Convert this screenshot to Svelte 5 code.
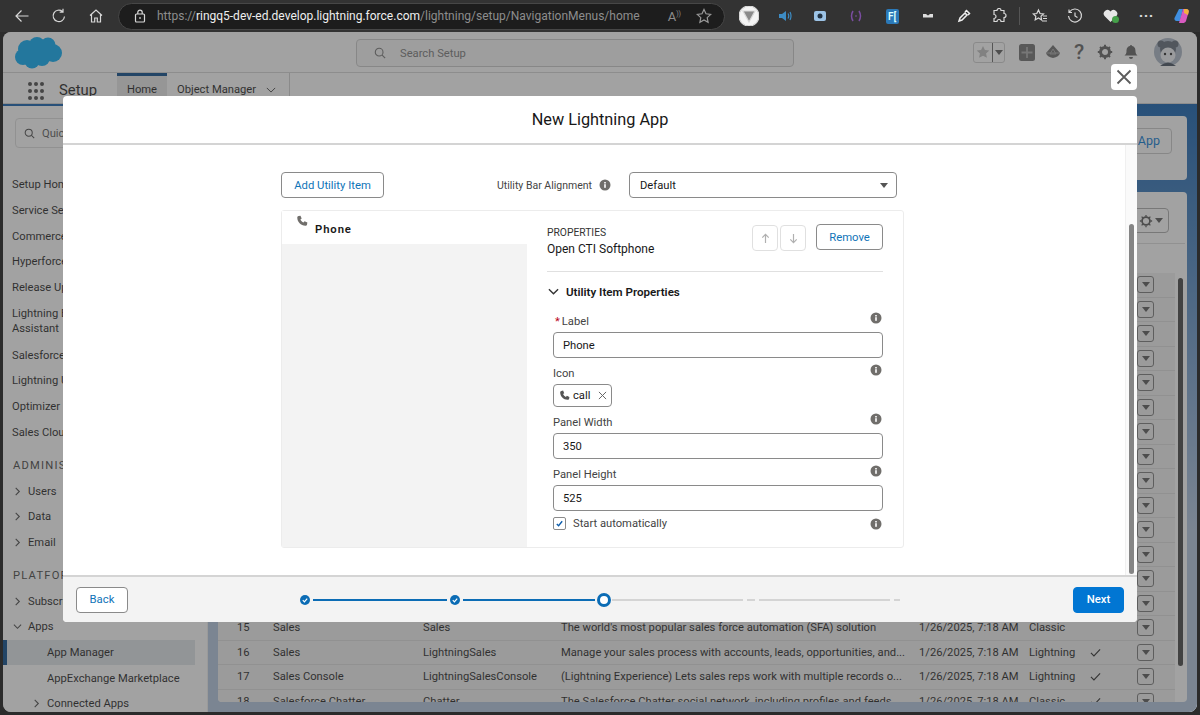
<script lang="ts">
  // New Lightning App wizard, utility items step, over a dimmed Setup page.
  const sideItems = [
    { label: 'Setup Home' },
    { label: 'Service Setup' },
    { label: 'Commerce Setup' },
    { label: 'Hyperforce Assistant' },
    { label: 'Release Updates' },
    { label: 'Lightning Experience Assistant', wrap: true },
    { label: 'Salesforce Go' },
    { label: 'Lightning Usage' },
    { label: 'Optimizer' },
    { label: 'Sales Cloud Everywhere' },
    { head: 'ADMINISTRATION' },
    { label: 'Users', arrow: 'right' },
    { label: 'Data', arrow: 'right' },
    { label: 'Email', arrow: 'right' },
    { head: 'PLATFORM TOOLS' },
    { label: 'Subscriptions', arrow: 'right' },
    { label: 'Apps', arrow: 'down' },
    { label: 'App Manager', sub: true, active: true },
    { label: 'AppExchange Marketplace', sub: true },
    { label: 'Connected Apps', sub: true, arrow: 'right' },
  ];

  const visibleRows: Record<number, string[]> = {
    15: ['Sales', 'Sales', "The world's most popular sales force automation (SFA) solution", '1/26/2025, 7:18 AM', 'Classic', ''],
    16: ['Sales', 'LightningSales', 'Manage your sales process with accounts, leads, opportunities, and...', '1/26/2025, 7:18 AM', 'Lightning', 'y'],
    17: ['Sales Console', 'LightningSalesConsole', '(Lightning Experience) Lets sales reps work with multiple records o...', '1/26/2025, 7:18 AM', 'Lightning', 'y'],
    18: ['Salesforce Chatter', 'Chatter', 'The Salesforce Chatter social network, including profiles and feeds', '1/26/2025, 7:18 AM', 'Classic', 'y'],
  };
  const rows = Array.from({ length: 18 }, (_, i) => ({
    num: i + 1,
    cells: visibleRows[i + 1] ?? ['', '', '', '', '', ''],
  }));

  const phone = 'M3.2 1.2 5.6.8l1.5 3.5-1.6 1.3c.8 1.8 2.1 3.1 3.9 3.9l1.3-1.6 3.5 1.5-.4 2.4c-.2 1-1 1.6-2 1.6C6 13.4 1.6 9 1.6 3.2c0-1 .6-1.8 1.6-2z';
</script>

{#snippet info()}
  <svg class="info" viewBox="0 0 12 12" width="12" height="12"><circle cx="6" cy="6" r="5.5" fill="#706e6b" /><rect x="5.2" y="5.2" width="1.6" height="3.6" fill="#fff" /><rect x="5.2" y="3" width="1.6" height="1.5" fill="#fff" /></svg>
{/snippet}

{#snippet done()}
  <svg viewBox="0 0 10 10" width="10" height="10"><circle cx="5" cy="5" r="5" fill="#0b6cb5" /><path d="M2.8 5.2 4.4 6.8 7.2 3.6" fill="none" stroke="#fff" stroke-width="1.2" /></svg>
{/snippet}

<div class="screen">
  <div class="toolbar">
    <div class="nav-icons">
      <svg viewBox="0 0 16 16" width="16" height="16"><path d="M14.5 8H2M7.5 2.5 2 8l5.500 5.500" /></svg>
      <svg viewBox="0 0 16 16" width="16" height="16"><path d="M13.500 8.500A5.700 5.700 0 1 1 11.500 3.500M12 .8v3.400H8.700" /></svg>
      <svg viewBox="0 0 16 16" width="16" height="16"><path d="M2 7.500 8 2l6 5.500M3.500 6.500V14h3.200v-4h2.600v4h3.200V6.500" /></svg>
    </div>
    <div class="url">
      <svg viewBox="0 0 14 14" width="14" height="14"><rect x="2.500" y="5" width="9" height="8" rx="1" /><path d="M4.800 5V3.300a2.200 2.200 0 0 1 4.400 0V5M7 8v2" /></svg>
      <span class="address"><span class="dim">https://</span>ringq5-dev-ed.develop.lightning.force.com<span class="dim">/lightning/setup/NavigationMenus/home</span></span>
      <span class="read">A<sup>))</sup></span>
      <svg class="url-star" viewBox="0 0 16 16" width="16" height="16"><path d="m8 1.500 2 4.300 4.700.6-3.500 3.200.9 4.700L8 12l-4.100 2.300.9-4.700L1.300 6.400 6 5.800z" /></svg>
    </div>
    <div class="ext">
      <span class="ext-v"><svg viewBox="0 0 20 20" width="20" height="20"><circle cx="10" cy="10" r="10" fill="#f4f4f4" /><path d="M4 5h12l-6 11z" fill="#8a8a8a" /></svg></span>
      <svg viewBox="0 0 14 14" width="14" height="14"><path d="M1 5h3l4-3v10L4 9H1z" fill="#3d8cc4" stroke="none" /><path d="M10 4.500q1.500 2.500 0 5M12 3q2 4 0 8" stroke="#3d8cc4" /></svg>
      <svg viewBox="0 0 14 14" width="14" height="14"><rect x="1" y="2" width="12" height="10" rx="2" fill="#9cc3e6" stroke="none" /><circle cx="7" cy="7" r="2.500" fill="#234" stroke="none" /></svg>
      <svg viewBox="0 0 14 14" width="14" height="14"><path d="M4 2Q1 7 4 12M10 2q3 5 0 10" stroke="#7a4da0" stroke-width="1.500" /><path d="M6 7h2" stroke="#7a4da0" /></svg>
      <span class="ext-fi">F[</span>
      <svg viewBox="0 0 14 14" width="14" height="14"><path d="M2 5h3l2 1.500L9 5h3v3.500H2z" fill="#ddd" stroke="none" /></svg>
      <svg viewBox="0 0 14 14" width="14" height="14"><path d="m2 12 1-3 5-5 2 2-5 5zM8 3l1.500-1.500 3 3L11 6" stroke="#eee" stroke-width="1.500" /></svg>
      <svg viewBox="0 0 16 16" width="16" height="16"><path d="M6 2.500a2 2 0 0 1 4 0H13v3a2 2 0 0 1 0 4V13.500H10a2 2 0 0 0-4 0H3V10.500a2 2 0 0 0 0-4V2.500z" /></svg>
      <span class="ext-sep"></span>
      <svg viewBox="0 0 16 16" width="16" height="16"><path d="m6.500 2 1.500 3.500 3.500.5-2.500 2.300.6 3.700L6.500 10 3.200 11.800 3.800 8.300 1.300 6 4.800 5.500zM11 8h4M11 10.500h4M10 13h5" /></svg>
      <svg viewBox="0 0 16 16" width="16" height="16"><path d="M2.500 4A6.500 6.500 0 1 1 1.500 8M2 1.500V4.500H5M8 4.500V8l2.500 1.500" /></svg>
      <svg viewBox="0 0 18 16" width="18" height="16"><path d="M8.500 14 2.500 8A3.500 3.500 0 0 1 8.500 3.500 3.500 3.500 0 0 1 14.500 8z" fill="#e6e6e6" stroke="none" /><circle cx="13.500" cy="11.500" r="3.500" fill="#45a04a" stroke="none" /></svg>
      <span class="ext-dots">···</span>
      <svg viewBox="0 0 18 18" width="18" height="18"><path d="M6 2h4l-3 12H3.500C2 14 1 12.500 1.500 11z" fill="#3f8fe0" stroke="none" /><path d="M10 2h3c2 0 3 2 2.500 3.500L13 14c-.5 1.500-2 2-3 2H6z" fill="#d85ac0" stroke="none" /><path d="M11 2h2.500C15 2 16 3 15.800 4.500L15 8 11 6z" fill="#f0b040" stroke="none" /></svg>
    </div>
  </div>

  <div class="window">
    <header class="top">
      <svg class="logo" viewBox="0 0 48 32" width="48" height="32"><g fill="#00a9f4"><circle cx="12" cy="12" r="9" /><circle cx="22" cy="8" r="8" /><circle cx="33" cy="8" r="7.500" /><circle cx="38" cy="16" r="9" /><circle cx="27" cy="21" r="8" /><circle cx="17" cy="24" r="7.500" /><circle cx="8" cy="20" r="8" /><rect x="10" y="8" width="26" height="16" /></g></svg>
      <div class="search">
        <svg viewBox="0 0 14 14" width="12" height="12"><circle cx="6" cy="6" r="4.500" /><path d="m9.500 9.500 3.500 3.500" /></svg>
        <span>Search Setup</span>
      </div>
      <div class="global">
        <div class="fav">
          <span class="fav-star"><svg viewBox="0 0 16 16" width="14" height="14"><path d="m8 1 2.200 4.600 5 .6-3.700 3.400 1 5L8 12.200l-4.500 2.400 1-5L.800 6.200l5-.6z" /></svg></span>
          <span class="fav-drop"></span>
        </div>
        <svg viewBox="0 0 16 17" width="16" height="17"><rect width="16" height="17" rx="2.500" fill="#6b6b6b" /><path d="M8 3v11M2.500 8.500h11" stroke="#a8a8a8" stroke-width="1.800" /></svg>
        <svg viewBox="0 0 16 16" width="16" height="16"><path d="M8 1 15 9q-1 4-7 5Q2 13 1 9z" fill="#6b6b6b" /><path d="M8 5 5 10h6zM1 9h14" stroke="#a8a8a8" fill="none" /></svg>
        <span class="help">?</span>
        <svg viewBox="0 0 16 16" width="16" height="16"><circle cx="8" cy="8" r="4.500" fill="none" stroke="#5f5f5f" stroke-width="3" /><path d="M8 .8v2.500M8 12.700v2.500M.8 8h2.500M12.700 8h2.500M3 3l1.800 1.800M11.200 11.200 13 13M13 3l-1.800 1.800M4.800 11.200 3 13" stroke="#5f5f5f" stroke-width="2" /></svg>
        <svg viewBox="0 0 16 16" width="16" height="16"><path d="M8 1a1 1 0 0 1 1 1c3 .7 3.500 3 3.500 5.500 0 2 1 3 2 4H1.500c1-1 2-2 2-4C3.500 5 4 2.700 7 2a1 1 0 0 1 1-1zM6 13h4a2 2 0 0 1-4 0z" fill="#5f5f5f" /></svg>
        <svg class="avatar" viewBox="0 0 28 28" width="28" height="28"><circle cx="14" cy="14" r="14" fill="#a9b4c4" /><circle cx="7" cy="6" r="3.500" fill="#5c6675" /><circle cx="21" cy="6" r="3.500" fill="#5c6675" /><circle cx="14" cy="11" r="8" fill="#5c6675" /><circle cx="14" cy="17" r="7.500" fill="#eef1f5" /><circle cx="11" cy="16" r="1.200" fill="#222" /><circle cx="17" cy="16" r="1.200" fill="#222" /><path d="M6 28q8-7 16 0z" fill="#3f4a5a" /></svg>
      </div>
    </header>

    <nav class="subnav">
      <div class="waffle">
        {#each Array(9) as _}<i></i>{/each}
      </div>
      <span class="app-name">Setup</span>
      <span class="tab on">Home</span>
      <span class="tab">Object Manager
        <svg viewBox="0 0 12 12" width="10" height="10"><path d="m1 3.500 5 5 5-5" /></svg>
      </span>
    </nav>

    <div class="page">
      <aside class="side">
        <div class="quick">
          <svg viewBox="0 0 14 14" width="11" height="11"><circle cx="6" cy="6" r="4.500" /><path d="m9.500 9.500 3.500 3.500" /></svg>
          <span>Quick Find</span>
        </div>
        <ul>
          {#each sideItems as item}
            {#if item.head}
              <li class="side-head">{item.head}</li>
            {:else}
              <li class="side-item" class:sub={item.sub} class:active={item.active} class:wrap={item.wrap} class:has-arrow={item.arrow}>
                {#if item.arrow}
                  <svg class="arrow" class:down={item.arrow === 'down'} viewBox="0 0 10 10" width="9" height="9"><path d="m3 1 4 4-4 4" /></svg>
                {/if}
                <span>{item.label}</span>
              </li>
            {/if}
          {/each}
        </ul>
      </aside>

      <main class="main">
        <section class="card head-card">
          <span class="new-app">New Lightning App</span>
        </section>
        <section class="card list-card">
          <div class="list-tools">
            <span class="gear-btn">
              <svg viewBox="0 0 16 16" width="14" height="14"><circle cx="8" cy="8" r="4.500" fill="none" stroke="#555" stroke-width="2" /><path d="M8 1v2M8 13v2M1 8h2M13 8h2M3 3l1.500 1.500M11.500 11.500 13 13M13 3l-1.500 1.500M4.500 11.500 3 13" stroke="#555" stroke-width="1.500" /></svg>
              <i class="caret"></i>
            </span>
          </div>
          <div class="list-head"></div>
          <div class="table-wrap">
            <div class="table">
              {#each rows as row}
                <div class="tr">
                  <span class="num">{row.num}</span>
                  <span>{row.cells[0]}</span>
                  <span>{row.cells[1]}</span>
                  <span>{row.cells[2]}</span>
                  <span>{row.cells[3]}</span>
                  <span>{row.cells[4]}</span>
                  <span class="tick">
                    {#if row.cells[5]}
                      <svg viewBox="0 0 12 12" width="11" height="11"><path d="m1 6.500 3.300 3.300L11 2.500" /></svg>
                    {/if}
                  </span>
                  <span class="row-btn"><i class="caret"></i></span>
                </div>
              {/each}
            </div>
            <div class="page-scroll"></div>
          </div>
        </section>
      </main>
    </div>

    <div class="backdrop"></div>

    <button class="close" aria-label="Close">
      <svg viewBox="0 0 16 16" width="16" height="16"><path d="m1.500 1.500 13 13M14.500 1.500l-13 13" /></svg>
    </button>

    <div class="modal">
      <div class="modal-head">New Lightning App</div>
      <div class="modal-body">
        <div class="content">
          <div class="topline">
            <button class="btn add">Add Utility Item</button>
            <span class="align-label">Utility Bar Alignment</span>
            {@render info()}
            <div class="select">
              <span>Default</span>
              <i class="caret"></i>
            </div>
          </div>

          <div class="panel">
            <div class="items">
              <div class="item">
                <svg viewBox="0 0 15 15" width="12" height="12"><path d={phone} /></svg>
                <span>Phone</span>
              </div>
            </div>

            <div class="props">
              <div class="props-head">
                <div class="props-title">
                  <div class="eyebrow">PROPERTIES</div>
                  <div class="type">Open CTI Softphone</div>
                </div>
                <span class="move">
                  <svg viewBox="0 0 12 12" width="11" height="11"><path d="M6 11V1.500M2.500 5 6 1.500 9.500 5" /></svg>
                </span>
                <span class="move">
                  <svg viewBox="0 0 12 12" width="11" height="11"><path d="M6 1v9.500M2.500 7 6 10.500 9.500 7" /></svg>
                </span>
                <button class="btn remove">Remove</button>
              </div>

              <div class="section-title">
                <svg viewBox="0 0 12 12" width="11" height="11"><path d="m1 3.500 5 5 5-5" /></svg>
                Utility Item Properties
              </div>

              <div class="fields">
                <div class="field">
                  <div class="field-label"><span><b>*</b>Label</span>{@render info()}</div>
                  <div class="input">Phone</div>
                </div>
                <div class="field">
                  <div class="field-label"><span>Icon</span>{@render info()}</div>
                  <div class="pill">
                    <svg viewBox="0 0 15 15" width="11" height="11"><path d={phone} /></svg>
                    <span>call</span>
                    <svg class="x" viewBox="0 0 10 10" width="9" height="9"><path d="m1 1 8 8M9 1 1 9" /></svg>
                  </div>
                </div>
                <div class="field">
                  <div class="field-label"><span>Panel Width</span>{@render info()}</div>
                  <div class="input">350</div>
                </div>
                <div class="field">
                  <div class="field-label"><span>Panel Height</span>{@render info()}</div>
                  <div class="input">525</div>
                </div>
                <div class="check-row">
                  <span class="checkbox"><svg viewBox="0 0 10 10" width="9" height="9"><path d="m2 5.500 2 2 4-5" /></svg></span>
                  <span>Start automatically</span>
                  {@render info()}
                </div>
              </div>
            </div>
          </div>
        </div>
        <div class="track"></div>
        <div class="thumb"></div>
      </div>
      <div class="modal-foot">
        <button class="btn back">Back</button>
        <div class="progress">
          {@render done()}
          <i class="line blue l1"></i>
          {@render done()}
          <i class="line blue l2"></i>
          <span class="current"></span>
          <i class="line l3"></i>
          <i class="line dash"></i>
          <i class="line l4"></i>
          <i class="line dash end"></i>
        </div>
        <button class="btn next">Next</button>
      </div>
    </div>
  </div>
</div>

<style>
  :global(body) {
    margin: 0;
    background: #2b2b2b;
  }
  .screen {
    width: 1200px;
    height: 715px;
    display: flex;
    flex-direction: column;
    overflow: hidden;
    font-family: Roboto, 'Liberation Sans', sans-serif;
    font-size: 11.2px;
    color: #181818;
  }
  button {
    font-family: inherit;
  }

  /* browser chrome */
  .toolbar {
    height: 32px;
    flex-shrink: 0;
    display: flex;
    align-items: center;
    background: #333;
  }
  .toolbar svg {
    fill: none;
    stroke: #d8d8d8;
    stroke-width: 1.2;
    flex-shrink: 0;
  }
  .nav-icons {
    display: flex;
    gap: 21px;
    padding-left: 14px;
    width: 118px;
    box-sizing: border-box;
  }
  .url {
    width: 607px;
    height: 27px;
    box-sizing: border-box;
    display: flex;
    align-items: center;
    padding: 0 12px 0 14px;
    background: #1d1d1d;
    border: 1px solid #474747;
    border-radius: 14px;
  }
  .address {
    margin-left: 10px;
    flex: 1;
    min-width: 0;
    color: #eee;
    font-size: 12px;
    white-space: nowrap;
  }
  .dim {
    color: #8d8d8d;
  }
  .read {
    color: #8d8d8d;
    font-size: 13px;
    margin-right: 15px;
  }
  .read sup {
    font-size: 7px;
  }
  .toolbar .url-star {
    stroke: #9a9a9a;
  }
  .ext {
    flex: 1;
    display: grid;
    grid-template-columns: repeat(8, 35.8px) 5px repeat(5, 35.4px);
    align-items: center;
    justify-items: center;
    padding-left: 6px;
  }
  .ext-v {
    display: flex;
  }
  .ext-fi {
    width: 13px;
    height: 15px;
    background: #2b79b8;
    color: #dff;
    font-size: 10px;
    font-weight: 600;
    text-align: center;
    line-height: 15px;
    border-radius: 2px;
  }
  .ext-sep {
    width: 1px;
    height: 18px;
    background: #555;
  }
  .ext-dots {
    color: #ddd;
    font-size: 15px;
    font-weight: 700;
    letter-spacing: 0.5px;
  }

  /* dimmed window */
  .window {
    position: relative;
    flex: 1;
    min-height: 0;
    margin: 0 3px 3px;
    border-radius: 8px;
    overflow: hidden;
    display: flex;
    flex-direction: column;
    background: #fff;
  }
  .backdrop {
    position: absolute;
    inset: 0;
    background: rgba(70, 70, 70, 0.5);
  }
  .top {
    height: 41px;
    flex-shrink: 0;
    display: flex;
    align-items: center;
    box-sizing: border-box;
    border-bottom: 1px solid #d5d5d5;
    position: relative;
  }
  .logo {
    margin-left: 12px;
    margin-top: 2px;
  }
  .search {
    position: absolute;
    left: 353px;
    top: 7px;
    width: 438px;
    height: 28px;
    box-sizing: border-box;
    display: flex;
    align-items: center;
    gap: 14px;
    padding-left: 17px;
    border: 1px solid #c9c9c9;
    border-radius: 4px;
    background: #f6f6f6;
    color: #747474;
  }
  .search svg {
    fill: none;
    stroke: #747474;
    stroke-width: 1.300;
  }
  .global {
    margin-left: auto;
    display: flex;
    align-items: center;
    gap: 10px;
    padding-right: 15px;
  }
  .fav {
    display: flex;
    height: 19px;
    margin-right: 4px;
    border: 1px solid #c9c9c9;
    border-radius: 3px;
    opacity: 0.9;
  }
  .fav-star {
    width: 18px;
    display: flex;
    align-items: center;
    justify-content: center;
  }
  .fav-star svg {
    fill: #b5b5b5;
  }
  .fav-drop {
    width: 11px;
    border-left: 1px solid #555;
    position: relative;
  }
  .fav-drop::after {
    content: '';
    position: absolute;
    left: 2px;
    top: 7px;
    border: 4px solid transparent;
    border-top: 5px solid #444;
    border-bottom: 0;
  }
  .help {
    font-size: 21px;
    font-weight: 500;
    color: #5f5f5f;
    width: 16px;
    text-align: center;
    line-height: 20px;
  }
  .avatar {
    margin-left: 5px;
  }
  .subnav {
    height: 31px;
    flex-shrink: 0;
    display: flex;
    align-items: stretch;
    box-sizing: border-box;
    border-bottom: 1px solid #d5d5d5;
  }
  .waffle {
    display: grid;
    grid-template-columns: repeat(3, 4px);
    gap: 3px 2px;
    align-content: center;
    margin-left: 25px;
    margin-top: 6px;
  }
  .waffle i {
    width: 4px;
    height: 4px;
    border-radius: 50%;
    background: #444;
  }
  .app-name {
    font-size: 14.800px;
    margin-left: 15px;
    width: 58px;
    line-height: 35px;
  }
  .tab {
    display: flex;
    align-items: center;
    box-sizing: border-box;
    padding: 3px 10px 0;
    height: 30px;
    gap: 10px;
  }
  .tab.on {
    background: #e6e6e6;
    border-top: 3px solid #014486;
    width: 50px;
    justify-content: center;
    padding: 0;
  }
  .tab:last-child {
    border-right: 1px solid #cfcfcf;
    padding-right: 13px;
  }
  .tab svg {
    fill: none;
    stroke: #444;
    stroke-width: 1.200;
  }
  .page {
    flex: 1;
    min-height: 0;
    display: flex;
  }
  .side {
    width: 204px;
    flex-shrink: 0;
    box-sizing: content-box;
    padding-top: 12px;
    overflow: hidden;
    border-right: 1px solid #eee;
    border-top: 2px solid #0a5bad;
  }
  .quick {
    margin-left: 12px;
    width: 180px;
    height: 30px;
    box-sizing: border-box;
    display: flex;
    align-items: center;
    gap: 7px;
    padding-left: 8px;
    border: 1px solid #ddd;
    border-radius: 4px;
    color: #555;
  }
  .quick svg {
    fill: none;
    stroke: #444;
    stroke-width: 1.300;
  }
  ul {
    list-style: none;
    margin: 24px 12px 0 0;
    padding: 0;
  }
  .side-item {
    height: 25.700px;
    display: flex;
    align-items: center;
    padding-left: 9px;
    white-space: nowrap;
    position: relative;
  }
  .side-item.wrap {
    height: 42px;
    white-space: normal;
    line-height: 15.500px;
  }
  .side-item.wrap span {
    width: 115px;
  }
  .side-item.has-arrow {
    padding-left: 25px;
  }
  .side-item.sub {
    padding-left: 44px;
  }
  .side-item.active {
    background: #dfe4e9;
    box-shadow: inset 4px 0 0 #014486;
  }
  .arrow {
    position: absolute;
    left: 10px;
    fill: none;
    stroke: #444;
    stroke-width: 1.200;
  }
  .arrow.down {
    transform: rotate(90deg);
  }
  .sub .arrow {
    left: 29px;
  }
  .side-head {
    height: 33px;
    padding: 12px 0 0 10px;
    box-sizing: border-box;
    letter-spacing: 1.200px;
    color: #3e3e3c;
    line-height: 18px;
    white-space: nowrap;
  }
  .main {
    flex: 1;
    min-width: 0;
    padding: 12px 10px 10px;
    display: flex;
    flex-direction: column;
    gap: 12px;
    background: linear-gradient(#0a5bad, #b0c4df 70%);
  }
  .card {
    background: #fff;
    border-radius: 4px;
  }
  .head-card {
    height: 64px;
    flex-shrink: 0;
    display: flex;
    justify-content: flex-end;
    align-items: center;
    padding: 0 15px 14px 0;
    box-sizing: border-box;
  }
  .new-app {
    width: 130px;
    height: 26px;
    box-sizing: border-box;
    border: 1px solid #c9c9c9;
    border-radius: 4px;
    color: #0176d3;
    font-size: 12.500px;
    line-height: 24px;
    text-align: right;
    padding-right: 11px;
  }
  .list-card {
    flex: 1;
    min-height: 0;
    display: flex;
    flex-direction: column;
    overflow: hidden;
  }
  .list-tools {
    height: 52px;
    flex-shrink: 0;
    display: flex;
    justify-content: flex-end;
    align-items: flex-start;
    padding: 16px 16px 0 0;
    box-sizing: border-box;
    border-bottom: 1px solid #ddd;
    margin-right: 2px;
  }
  .gear-btn {
    width: 40px;
    height: 25px;
    box-sizing: border-box;
    border: 1px solid #aaa;
    border-radius: 4px;
    display: flex;
    align-items: center;
    justify-content: flex-end;
    gap: 2px;
    padding-right: 5px;
  }
  .caret {
    display: block;
    border: 4px solid transparent;
    border-top: 5px solid #555;
    border-bottom: 0;
  }
  .list-head {
    height: 29px;
    flex-shrink: 0;
  }
  .table-wrap {
    flex: 1;
    min-height: 0;
    display: flex;
    overflow: hidden;
  }
  .table {
    width: 957px;
    flex-shrink: 0;
    background: #f0f0f0;
  }
  .tr {
    height: 24.500px;
    box-sizing: border-box;
    display: grid;
    grid-template-columns: 55px 150px 138px 358px 110px 60px 48px 38px;
    align-items: center;
    border-bottom: 1px solid #dcdcdc;
    white-space: nowrap;
  }
  .num {
    padding-left: 19px;
  }
  .tick svg {
    display: block;
    margin-left: 1px;
    fill: none;
    stroke: #222;
    stroke-width: 1.200;
  }
  .row-btn {
    width: 17px;
    height: 17px;
    box-sizing: border-box;
    border: 1px solid #777;
    border-radius: 3px;
    display: flex;
    align-items: center;
    justify-content: center;
  }
  .page-scroll {
    width: 5px;
    height: 388px;
    margin: 5px 0 0 3px;
    border-radius: 3px;
    background: #3e3e3e;
  }

  /* close and modal sit on the backdrop */
  .close {
    position: absolute;
    left: 1108px;
    top: 32px;
    width: 26px;
    height: 26px;
    padding: 0;
    border: none;
    border-radius: 4px;
    background: #fff;
    display: flex;
    align-items: center;
    justify-content: center;
  }
  .close svg {
    fill: none;
    stroke: #5c5c5c;
    stroke-width: 1.800;
  }
  .modal {
    position: absolute;
    left: 60px;
    top: 64px;
    width: 1074px;
    height: 526px;
    display: flex;
    flex-direction: column;
    background: #fff;
    border-radius: 4px;
    overflow: hidden;
  }
  .modal-head {
    height: 49px;
    flex-shrink: 0;
    box-sizing: border-box;
    border-bottom: 2px solid #d4d4d4;
    font-size: 16.300px;
    line-height: 48px;
    text-align: center;
    color: #181818;
  }
  .modal-body {
    flex: 1;
    min-height: 0;
    display: flex;
    position: relative;
  }
  .content {
    flex: 1;
    min-width: 0;
    padding: 27px 0 0 218px;
  }
  .track {
    width: 11px;
    background: #fafafa;
    border-left: 1px solid #f0f0f0;
  }
  .thumb {
    position: absolute;
    right: 3px;
    top: 79px;
    width: 5px;
    height: 350px;
    border-radius: 3px;
    background: #858585;
  }
  .topline {
    width: 623px;
    box-sizing: border-box;
    padding-right: 7px;
    display: flex;
    align-items: center;
  }
  .btn {
    height: 26px;
    box-sizing: border-box;
    padding: 0;
    background: #fff;
    border: 1px solid #8a8a8a;
    border-radius: 4px;
    color: #0f74b8;
    font-size: 11.300px;
  }
  .add {
    width: 103px;
  }
  .align-label {
    margin-left: auto;
    font-size: 10.500px;
    color: #444;
    white-space: nowrap;
  }
  .info {
    flex-shrink: 0;
  }
  .topline .info {
    margin-left: 7px;
  }
  .select {
    margin-left: 18px;
    width: 268px;
    flex-shrink: 0;
    height: 26px;
    box-sizing: border-box;
    border: 1px solid #8a8a8a;
    border-radius: 4px;
    display: flex;
    align-items: center;
    justify-content: space-between;
    padding: 0 8px 0 10px;
  }
  .panel {
    width: 623px;
    height: 338px;
    box-sizing: border-box;
    margin-top: 12px;
    display: grid;
    grid-template-columns: 245px 1fr;
    border: 1px solid #ececec;
    border-radius: 3px;
  }
  .items {
    background: #f3f3f3;
  }
  .item {
    height: 33px;
    background: #fff;
    position: relative;
  }
  .item svg {
    position: absolute;
    left: 14px;
    top: 4px;
    fill: #706e6b;
  }
  .item span {
    position: absolute;
    left: 33px;
    top: 12px;
    font-size: 11.300px;
    font-weight: 600;
    letter-spacing: 0.900px;
  }
  .props {
    padding: 13px 20px 0 20px;
    min-width: 0;
  }
  .props-head {
    display: flex;
    align-items: flex-start;
    padding-bottom: 12px;
    border-bottom: 1px solid #e0e0e0;
  }
  .props-title {
    flex: 1;
    padding-top: 1px;
  }
  .eyebrow {
    font-size: 10.300px;
    line-height: 15px;
    color: #333;
  }
  .type {
    font-size: 12px;
    line-height: 19px;
  }
  .move {
    width: 26px;
    height: 26px;
    box-sizing: border-box;
    margin-top: 1px;
    margin-right: 2px;
    border: 1px solid #e0e0e0;
    border-radius: 4px;
    display: flex;
    align-items: center;
    justify-content: center;
  }
  .move svg {
    fill: none;
    stroke: #b0b0b0;
    stroke-width: 1.300;
  }
  .remove {
    width: 67px;
    margin-left: 8px;
  }
  .section-title {
    display: flex;
    align-items: center;
    gap: 7px;
    height: 39px;
    font-size: 11.600px;
    font-weight: 600;
    padding-left: 1px;
  }
  .section-title svg {
    fill: none;
    stroke: #333;
    stroke-width: 1.500;
  }
  .fields {
    padding-left: 6px;
    padding-top: 1px;
  }
  .field-label {
    display: flex;
    justify-content: space-between;
    align-items: flex-start;
    height: 20px;
    padding-right: 1px;
    color: #444;
    line-height: 20px;
  }
  .field-label b {
    color: #ba0517;
    font-weight: 400;
    margin: 0 2px;
  }
  .input {
    height: 26px;
    box-sizing: border-box;
    border: 1px solid #8a8a8a;
    border-radius: 4px;
    padding-left: 9px;
    line-height: 25px;
  }
  .field {
    margin-bottom: 6px;
  }
  .pill {
    display: flex;
    align-items: center;
    gap: 3px;
    width: 59px;
    height: 23px;
    box-sizing: border-box;
    padding-left: 5px;
    border: 1px solid #8a8a8a;
    border-radius: 4px;
  }
  .pill svg {
    fill: #555;
    flex-shrink: 0;
  }
  .pill .x {
    margin-left: 5px;
    fill: none;
    stroke: #666;
    stroke-width: 1.100;
  }
  .check-row {
    display: flex;
    align-items: center;
    gap: 7px;
    color: #444;
    padding-right: 1px;
  }
  .check-row .info {
    margin-left: auto;
  }
  .checkbox {
    width: 13px;
    height: 13px;
    box-sizing: border-box;
    border: 1px solid #8a8a8a;
    border-radius: 2px;
    display: flex;
    align-items: center;
    justify-content: center;
  }
  .checkbox svg {
    fill: none;
    stroke: #0b5cab;
    stroke-width: 1.500;
  }
  .modal-foot {
    height: 47px;
    flex-shrink: 0;
    box-sizing: border-box;
    border-top: 2px solid #d4d4d4;
    background: #f3f3f3;
    display: grid;
    grid-template-columns: 1fr auto 1fr;
    align-items: center;
    padding: 0 13px;
  }
  .back {
    width: 52px;
    justify-self: start;
  }
  .next {
    width: 51px;
    justify-self: end;
    background: #0176d3;
    border-color: #0176d3;
    color: #fff;
    font-weight: 500;
  }
  .progress {
    width: 600px;
    display: flex;
    align-items: center;
  }
  .progress svg {
    flex-shrink: 0;
  }
  .line {
    display: block;
    height: 2px;
    background: #d4d4d4;
    flex-shrink: 0;
  }
  .line.blue {
    background: #0b6cb5;
  }
  .l1 {
    width: 134px;
    margin: 0 3px;
  }
  .l2 {
    width: 132px;
    margin: 0 2px 0 3px;
  }
  .current {
    width: 14px;
    height: 14px;
    box-sizing: border-box;
    flex-shrink: 0;
    border-radius: 50%;
    border: 3.500px solid #0b6cb5;
    background: #fff;
  }
  .l3 {
    width: 131px;
    margin-left: 1px;
  }
  .dash {
    width: 8px;
    margin: 0 4px;
  }
  .dash.end {
    width: 6px;
    margin-right: 0;
  }
  .l4 {
    width: 131px;
  }
</style>
